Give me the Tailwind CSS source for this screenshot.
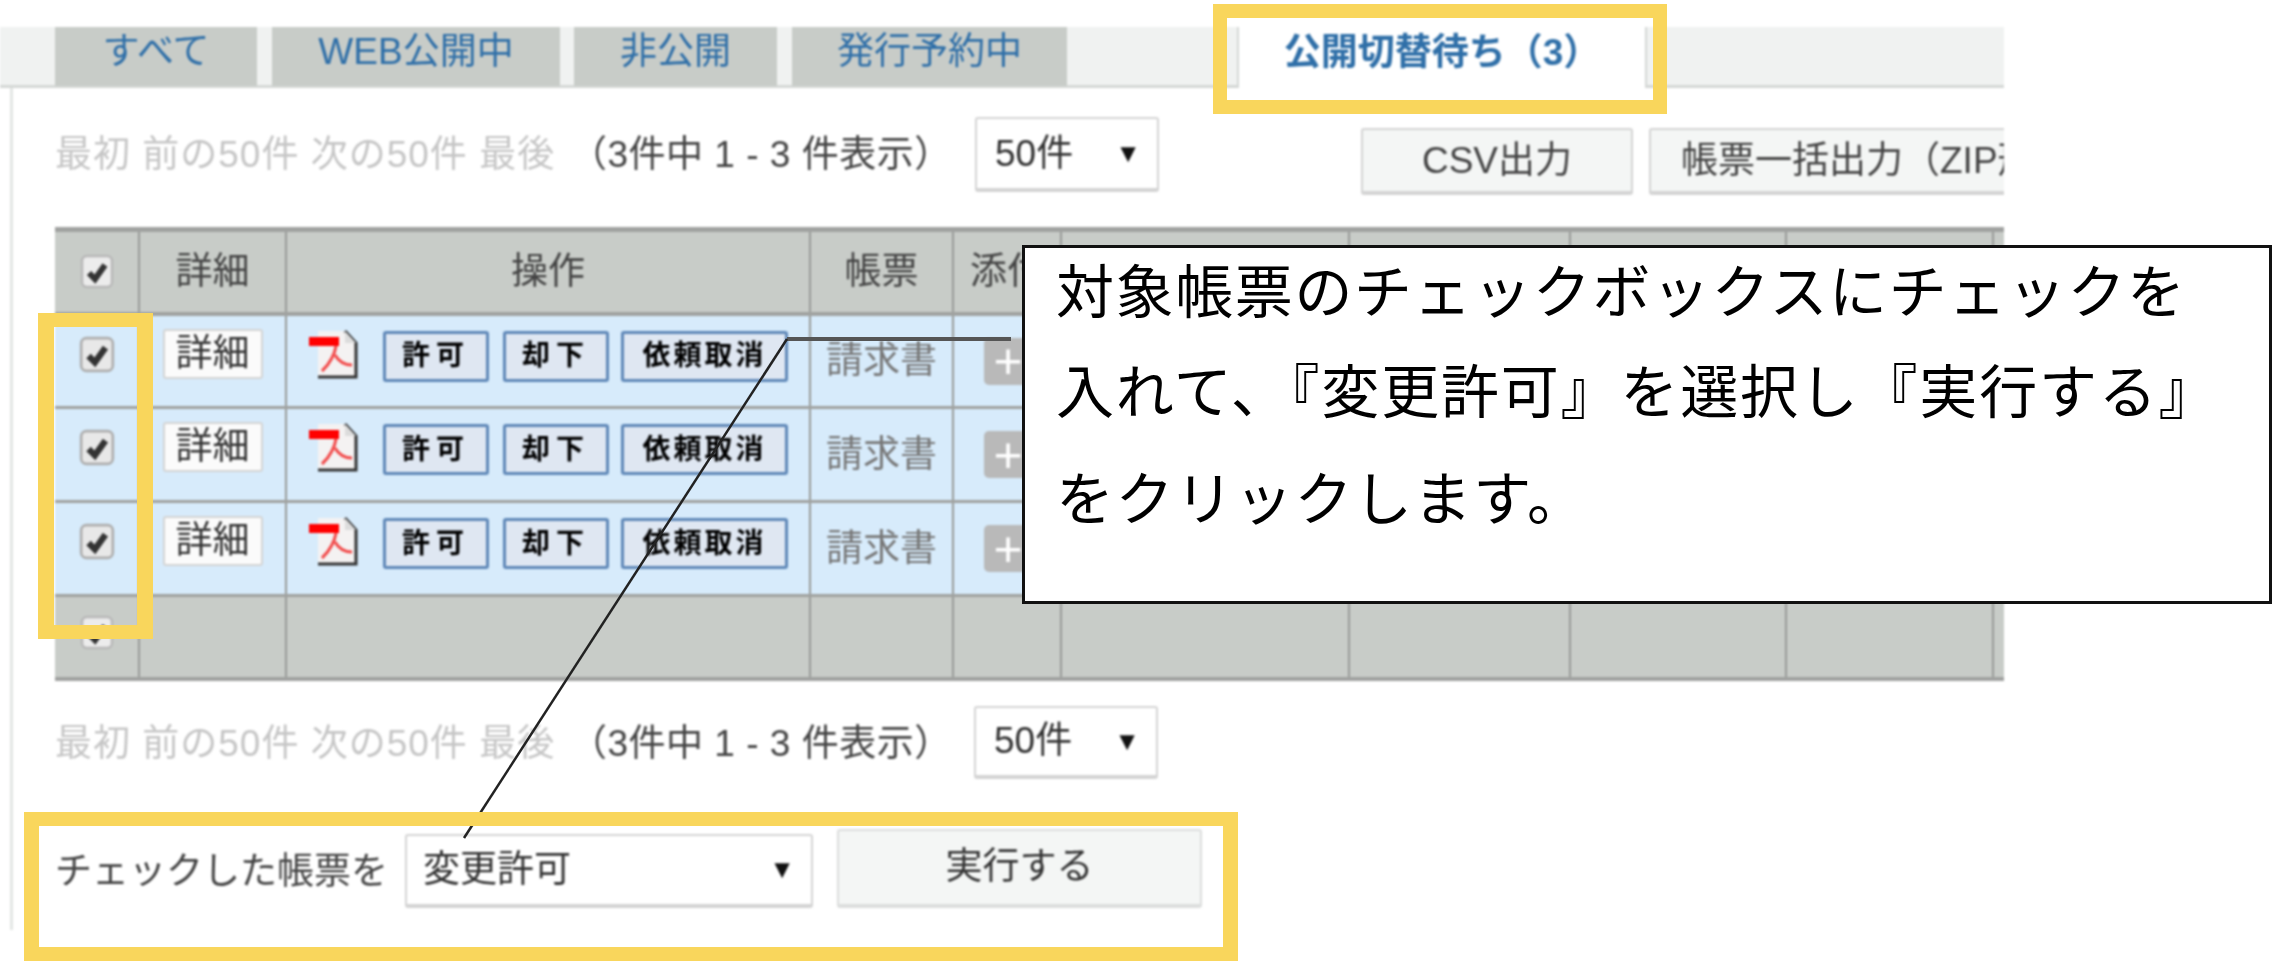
<!DOCTYPE html>
<html lang="ja">
<head>
  <meta charset="UTF-8"/>
  <title>公開切替待ち</title>
  <script src="https://cdn.jsdelivr.net/npm/@tailwindcss/browser@4"></script>
</head>
<body class="bg-white">
<div class="relative w-[2283px] h-[976px] overflow-hidden bg-white text-[#444] text-[37px] font-['Liberation_Sans','Noto_Sans_CJK_JP',sans-serif]">

  <!-- screenshot part, slightly soft like the upscaled original -->
  <div class="w-[2004px] pt-[27px] blur-[1px]">
    <!-- tabs -->
    <div class="flex h-[61px] bg-[#f0f2f1] border-b-[3px] border-[#d5d8d6] text-[#2f6fa8] whitespace-nowrap leading-none">
      <div class="ml-[55px] w-[202px] h-[59px] bg-[#c8ccc8] flex items-center justify-center pb-[10px]">すべて</div>
      <div class="ml-[15px] w-[288px] h-[59px] bg-[#c8ccc8] flex items-center justify-center pb-[10px]">WEB公開中</div>
      <div class="ml-[14px] w-[203px] h-[59px] bg-[#c8ccc8] flex items-center justify-center pb-[10px]">非公開</div>
      <div class="ml-[15px] w-[275px] h-[59px] bg-[#c8ccc8] flex items-center justify-center pb-[10px]">発行予約中</div>
      <div class="ml-[170px] w-[410px] h-[61px] bg-white border-x-2 border-[#d5d8d6] flex items-center justify-center pb-[10px] font-bold">公開切替待ち（3）</div>
    </div>

    <!-- panel -->
    <div class="ml-[10px] h-[842px] border-l-[3px] border-[#e3e6e4] pl-[42px] overflow-hidden">
      <!-- upper pager -->
      <div class="flex items-start pt-[29px] h-[139px] whitespace-nowrap">
        <span class="shrink-0 w-[515px] text-[#c6c6c6] pt-[10px] tracking-[1px]">最初 前の50件 次の50件 最後</span>
        <span class="shrink-0 w-[405px] pt-[10px] tracking-[0.5px]">（3件中 1 - 3 件表示）</span>
        <div class="shrink-0 w-[184px] h-[75px] bg-white border-2 border-[#d4d4d4] border-b-[4px] rounded-[3px] flex items-center justify-between pl-[18px] pr-[16px] text-[#333]">
          <span>50件</span><span class="text-[26px] text-[#111]">▼</span>
        </div>
        <div class="shrink-0 ml-[202px] mt-[11px] w-[272px] h-[67px] bg-[#f4f6f5] border-2 border-[#d4d4d4] border-b-[4px] rounded-[3px] flex items-center justify-center">CSV出力</div>
        <div class="shrink-0 ml-[16px] mt-[11px] w-[420px] h-[67px] bg-[#f4f6f5] border-2 border-[#d4d4d4] border-b-[4px] rounded-[3px] flex items-center pl-[30px]">帳票一括出力（ZIP形式）</div>
      </div>

      <!-- table -->
      <table class="table-fixed border-collapse w-[1949px] text-center">
        <colgroup>
          <col class="w-[84px]"/><col class="w-[147px]"/><col class="w-[524px]"/><col class="w-[143px]"/><col class="w-[108px]"/><col class="w-[288px]"/><col class="w-[221px]"/><col class="w-[216px]"/><col class="w-[207px]"/><col class="w-[11px]"/>
        </colgroup>
        <tbody>
          <tr class="h-[84px] bg-[#c8ccc8] border-t-[5px] border-b-[4px] border-[#a0a2a0]">
            <td class="border-r-2 border-[#989a98]"><svg class="mx-auto w-[34px] h-[36px]" viewBox="0 0 34 36"><rect x="2" y="2" width="30" height="31" rx="5" fill="#ececec" stroke="#b8b8b8" stroke-width="2.5"/><path d="M9 19l6 6 10-14" fill="none" stroke="#333" stroke-width="6"/></svg></td>
            <td class="border-r-2 border-[#989a98]">詳細</td>
            <td class="border-r-2 border-[#989a98]">操作</td>
            <td class="border-r-2 border-[#989a98]">帳票</td>
            <td class="border-r-2 border-[#989a98] whitespace-nowrap">添付</td>
            <td class="border-r-2 border-[#989a98]"></td>
            <td class="border-r-2 border-[#989a98]"></td>
            <td class="border-r-2 border-[#989a98]"></td>
            <td class="border-r-2 border-[#989a98]"></td>
            <td></td>
          </tr>
          <tr class="h-[94px] bg-[#d7ebfb] border-b-[3px] border-[#a0a2a0]">
            <td class="border-r-2 border-[#989a98] align-top pt-[20px]"><svg class="mx-auto w-[36px] h-[38px]" viewBox="0 0 34 36"><rect x="2" y="2" width="30" height="31" rx="5" fill="#e8e8e8" stroke="#aeaeae" stroke-width="2.5"/><path d="M9 19l6 6 10-14" fill="none" stroke="#333" stroke-width="6"/></svg></td>
            <td class="border-r-2 border-[#989a98] align-top pt-[13px]"><div class="mx-auto w-[100px] h-[50px] bg-[#fbfbfb] border-2 border-[#d4d4d4] rounded-[3px] flex items-center justify-center text-[#333]">詳細</div></td>
            <td class="border-r-2 border-[#989a98] align-top pt-[13px]">
              <div class="flex items-start pl-[22px]">
                <svg class="w-[49px] h-[50px]" viewBox="0 0 49 50"><path d="M9 2H36L47 14V48H9Z" fill="#f4f2f2"/><path d="M36 2L47 14V48H9" fill="none" stroke="#333" stroke-width="3"/><path d="M36 2V14H47" fill="#dcdcdc"/><rect x="0" y="8" width="30" height="9" fill="#f00"/><path d="M27 17C26 24 21 35 13 42M26 26C30 33 36 36 43 36" fill="none" stroke="#f24b4b" stroke-width="3"/></svg>
                <div class="ml-[25px] mt-[2px] w-[106px] h-[51px] bg-[#dfe7f2] border-[3px] border-[#5f88b8] rounded-[3px] flex items-center justify-center text-black font-bold text-[28px] tracking-[6px]">許可</div>
                <div class="ml-[14px] mt-[2px] w-[106px] h-[51px] bg-[#dfe7f2] border-[3px] border-[#5f88b8] rounded-[3px] flex items-center justify-center text-black font-bold text-[28px] tracking-[6px]">却下</div>
                <div class="ml-[12px] mt-[2px] w-[167px] h-[51px] bg-[#dfe7f2] border-[3px] border-[#5f88b8] rounded-[3px] flex items-center justify-center text-black font-bold text-[28px] tracking-[3px] whitespace-nowrap">依頼取消</div>
              </div>
            </td>
            <td class="border-r-2 border-[#989a98] text-[#777]">請求書</td>
            <td class="border-r-2 border-[#989a98] align-top pl-[30px] pt-[22px]"><div class="w-[48px] h-[47px] bg-[#b9b9b9] rounded-[5px] flex items-center justify-center text-white text-[50px] leading-none">+</div></td>
            <td class="border-r-2 border-[#989a98]"></td><td class="border-r-2 border-[#989a98]"></td><td class="border-r-2 border-[#989a98]"></td><td class="border-r-2 border-[#989a98]"></td><td></td>
          </tr>
          <tr class="h-[94px] bg-[#d7ebfb] border-b-[3px] border-[#a0a2a0]">
            <td class="border-r-2 border-[#989a98] align-top pt-[20px]"><svg class="mx-auto w-[36px] h-[38px]" viewBox="0 0 34 36"><rect x="2" y="2" width="30" height="31" rx="5" fill="#e8e8e8" stroke="#aeaeae" stroke-width="2.5"/><path d="M9 19l6 6 10-14" fill="none" stroke="#333" stroke-width="6"/></svg></td>
            <td class="border-r-2 border-[#989a98] align-top pt-[13px]"><div class="mx-auto w-[100px] h-[50px] bg-[#fbfbfb] border-2 border-[#d4d4d4] rounded-[3px] flex items-center justify-center text-[#333]">詳細</div></td>
            <td class="border-r-2 border-[#989a98] align-top pt-[13px]">
              <div class="flex items-start pl-[22px]">
                <svg class="w-[49px] h-[50px]" viewBox="0 0 49 50"><path d="M9 2H36L47 14V48H9Z" fill="#f4f2f2"/><path d="M36 2L47 14V48H9" fill="none" stroke="#333" stroke-width="3"/><path d="M36 2V14H47" fill="#dcdcdc"/><rect x="0" y="8" width="30" height="9" fill="#f00"/><path d="M27 17C26 24 21 35 13 42M26 26C30 33 36 36 43 36" fill="none" stroke="#f24b4b" stroke-width="3"/></svg>
                <div class="ml-[25px] mt-[2px] w-[106px] h-[51px] bg-[#dfe7f2] border-[3px] border-[#5f88b8] rounded-[3px] flex items-center justify-center text-black font-bold text-[28px] tracking-[6px]">許可</div>
                <div class="ml-[14px] mt-[2px] w-[106px] h-[51px] bg-[#dfe7f2] border-[3px] border-[#5f88b8] rounded-[3px] flex items-center justify-center text-black font-bold text-[28px] tracking-[6px]">却下</div>
                <div class="ml-[12px] mt-[2px] w-[167px] h-[51px] bg-[#dfe7f2] border-[3px] border-[#5f88b8] rounded-[3px] flex items-center justify-center text-black font-bold text-[28px] tracking-[3px] whitespace-nowrap">依頼取消</div>
              </div>
            </td>
            <td class="border-r-2 border-[#989a98] text-[#777]">請求書</td>
            <td class="border-r-2 border-[#989a98] align-top pl-[30px] pt-[22px]"><div class="w-[48px] h-[47px] bg-[#b9b9b9] rounded-[5px] flex items-center justify-center text-white text-[50px] leading-none">+</div></td>
            <td class="border-r-2 border-[#989a98]"></td><td class="border-r-2 border-[#989a98]"></td><td class="border-r-2 border-[#989a98]"></td><td class="border-r-2 border-[#989a98]"></td><td></td>
          </tr>
          <tr class="h-[94px] bg-[#d7ebfb] border-b-[3px] border-[#a0a2a0]">
            <td class="border-r-2 border-[#989a98] align-top pt-[20px]"><svg class="mx-auto w-[36px] h-[38px]" viewBox="0 0 34 36"><rect x="2" y="2" width="30" height="31" rx="5" fill="#e8e8e8" stroke="#aeaeae" stroke-width="2.5"/><path d="M9 19l6 6 10-14" fill="none" stroke="#333" stroke-width="6"/></svg></td>
            <td class="border-r-2 border-[#989a98] align-top pt-[13px]"><div class="mx-auto w-[100px] h-[50px] bg-[#fbfbfb] border-2 border-[#d4d4d4] rounded-[3px] flex items-center justify-center text-[#333]">詳細</div></td>
            <td class="border-r-2 border-[#989a98] align-top pt-[13px]">
              <div class="flex items-start pl-[22px]">
                <svg class="w-[49px] h-[50px]" viewBox="0 0 49 50"><path d="M9 2H36L47 14V48H9Z" fill="#f4f2f2"/><path d="M36 2L47 14V48H9" fill="none" stroke="#333" stroke-width="3"/><path d="M36 2V14H47" fill="#dcdcdc"/><rect x="0" y="8" width="30" height="9" fill="#f00"/><path d="M27 17C26 24 21 35 13 42M26 26C30 33 36 36 43 36" fill="none" stroke="#f24b4b" stroke-width="3"/></svg>
                <div class="ml-[25px] mt-[2px] w-[106px] h-[51px] bg-[#dfe7f2] border-[3px] border-[#5f88b8] rounded-[3px] flex items-center justify-center text-black font-bold text-[28px] tracking-[6px]">許可</div>
                <div class="ml-[14px] mt-[2px] w-[106px] h-[51px] bg-[#dfe7f2] border-[3px] border-[#5f88b8] rounded-[3px] flex items-center justify-center text-black font-bold text-[28px] tracking-[6px]">却下</div>
                <div class="ml-[12px] mt-[2px] w-[167px] h-[51px] bg-[#dfe7f2] border-[3px] border-[#5f88b8] rounded-[3px] flex items-center justify-center text-black font-bold text-[28px] tracking-[3px] whitespace-nowrap">依頼取消</div>
              </div>
            </td>
            <td class="border-r-2 border-[#989a98] text-[#777]">請求書</td>
            <td class="border-r-2 border-[#989a98] align-top pl-[30px] pt-[22px]"><div class="w-[48px] h-[47px] bg-[#b9b9b9] rounded-[5px] flex items-center justify-center text-white text-[50px] leading-none">+</div></td>
            <td class="border-r-2 border-[#989a98]"></td><td class="border-r-2 border-[#989a98]"></td><td class="border-r-2 border-[#989a98]"></td><td class="border-r-2 border-[#989a98]"></td><td></td>
          </tr>
          <tr class="h-[83px] bg-[#c8ccc8] border-b-[4px] border-[#a0a2a0]">
            <td class="border-r-2 border-[#989a98] align-top pt-[18px]"><svg class="mx-auto w-[34px] h-[36px]" viewBox="0 0 34 36"><rect x="2" y="2" width="30" height="31" rx="5" fill="#ececec" stroke="#b8b8b8" stroke-width="2.5"/><path d="M9 19l6 6 10-14" fill="none" stroke="#333" stroke-width="6"/></svg></td>
            <td class="border-r-2 border-[#989a98]"></td><td class="border-r-2 border-[#989a98]"></td><td class="border-r-2 border-[#989a98]"></td><td class="border-r-2 border-[#989a98]"></td><td class="border-r-2 border-[#989a98]"></td><td class="border-r-2 border-[#989a98]"></td><td class="border-r-2 border-[#989a98]"></td><td class="border-r-2 border-[#989a98]"></td><td></td>
          </tr>
        </tbody>
      </table>

      <!-- lower pager -->
      <div class="flex items-start mt-[25px] whitespace-nowrap">
        <span class="shrink-0 w-[515px] text-[#c6c6c6] pt-[10px] tracking-[1px]">最初 前の50件 次の50件 最後</span>
        <span class="shrink-0 w-[404px] pt-[10px] tracking-[0.5px]">（3件中 1 - 3 件表示）</span>
        <div class="shrink-0 w-[184px] h-[73px] bg-white border-2 border-[#d4d4d4] border-b-[4px] rounded-[3px] flex items-center justify-between pl-[18px] pr-[16px] text-[#333]">
          <span>50件</span><span class="text-[26px] text-[#111]">▼</span>
        </div>
      </div>

      <!-- bulk action -->
      <div class="flex items-start mt-[50px] whitespace-nowrap">
        <span class="shrink-0 w-[350px] pt-[15px]">チェックした帳票を</span>
        <div class="shrink-0 mt-[5px] w-[408px] h-[74px] bg-white border-2 border-[#d4d4d4] border-b-[4px] rounded-[3px] flex items-center justify-between pl-[16px] pr-[16px] text-[#333]">
          <span>変更許可</span><span class="text-[26px] text-[#111]">▼</span>
        </div>
        <div class="shrink-0 ml-[24px] w-[365px] h-[79px] bg-[#f4f6f5] border-2 border-[#dcdedd] border-b-[4px] rounded-[3px] flex items-center justify-center text-[#333]">実行する</div>
      </div>
    </div>
  </div>

  <!-- leader lines -->
  <svg class="absolute inset-0 w-[2283px] h-[976px]" viewBox="0 0 2283 976" fill="none">
    <path d="M787 339H1011" stroke="#555" stroke-width="4"/>
    <path d="M787 339L464 838" stroke="#222" stroke-width="2.5"/>
  </svg>

  <!-- callout -->
  <div class="absolute left-[1022px] top-[245px] w-[1250px] h-[359px] bg-white border-[3px] border-[#111] pl-[31px] text-black text-[58px] whitespace-nowrap">
    <p class="leading-[90px] tracking-[1.6px]">対象帳票のチェックボックスにチェックを</p>
    <p class="leading-[110px] tracking-[1.8px]">入れて、『変更許可』を選択し『実行する』</p>
    <p class="leading-[104px] tracking-[1.6px]">をクリックします。</p>
  </div>

  <!-- yellow highlight frames -->
  <div class="absolute left-[1213px] top-[4px] w-[454px] h-[110px] border-[14px] border-[#f9d65c]"></div>
  <div class="absolute left-[38px] top-[313px] w-[115px] h-[326px] border-x-[16px] border-y-[14px] border-[#f9d65c]"></div>
  <div class="absolute left-[24px] top-[812px] w-[1214px] h-[149px] border-x-[15px] border-y-[14px] border-[#f9d65c]"></div>
</div>
</body>
</html>
